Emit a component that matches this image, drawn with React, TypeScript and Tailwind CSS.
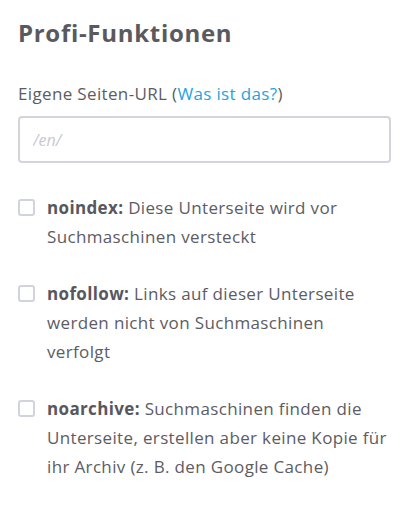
const options = [
  { key: "noindex", label: "noindex:", lines: ["Diese Unterseite wird vor", "Suchmaschinen versteckt"] },
  { key: "nofollow", label: "nofollow:", lines: ["Links auf dieser Unterseite", "werden nicht von Suchmaschinen", "verfolgt"] },
  {
    key: "noarchive",
    label: "noarchive:",
    lines: ["Suchmaschinen finden die", "Unterseite, erstellen aber keine Kopie für", "ihr Archiv (z. B. den Google Cache)"],
  },
];

export default function App() {
  return (
    <div className="min-h-[508px] w-[407px] bg-white px-[18px] pt-[17px] font-['Open_Sans',sans-serif] text-[#5d5c64]">
      <h2 className="text-[24px] font-bold leading-[32px] tracking-[0.7px] text-[#5a5960]">Profi-Funktionen</h2>

      <label className="mt-[35px] block text-[17px] leading-[20px] tracking-[0.35px]">
        Eigene Seiten-URL (<a className="text-[#1fa3df]">Was ist das?</a>)
      </label>

      <input
        type="text"
        placeholder="/en/"
        className="mt-[12px] block h-[47px] w-[373px] rounded-[4px] border-2 border-[#d3d4de] px-[13px] text-[16px] placeholder:italic placeholder:text-[#c9c9d0] focus:outline-none"
      />

      <div className="mt-[30px] flex flex-col gap-[28px]">
        {options.map((o) => (
          <label key={o.key} className="flex items-start">
            <span className="mt-[6px] block size-[17px] shrink-0 rounded-[3px] border-2 border-[#d1d3de] bg-white" />
            <span className="ml-[12px] flex flex-col whitespace-nowrap text-[17px] leading-[29px] tracking-[0.35px]">
              {o.lines.map((line, i) => (
                <span key={i}>
                  {i === 0 && <b className="font-bold text-[#58575e]">{o.label} </b>}
                  {line}
                </span>
              ))}
            </span>
          </label>
        ))}
      </div>
    </div>
  );
}
